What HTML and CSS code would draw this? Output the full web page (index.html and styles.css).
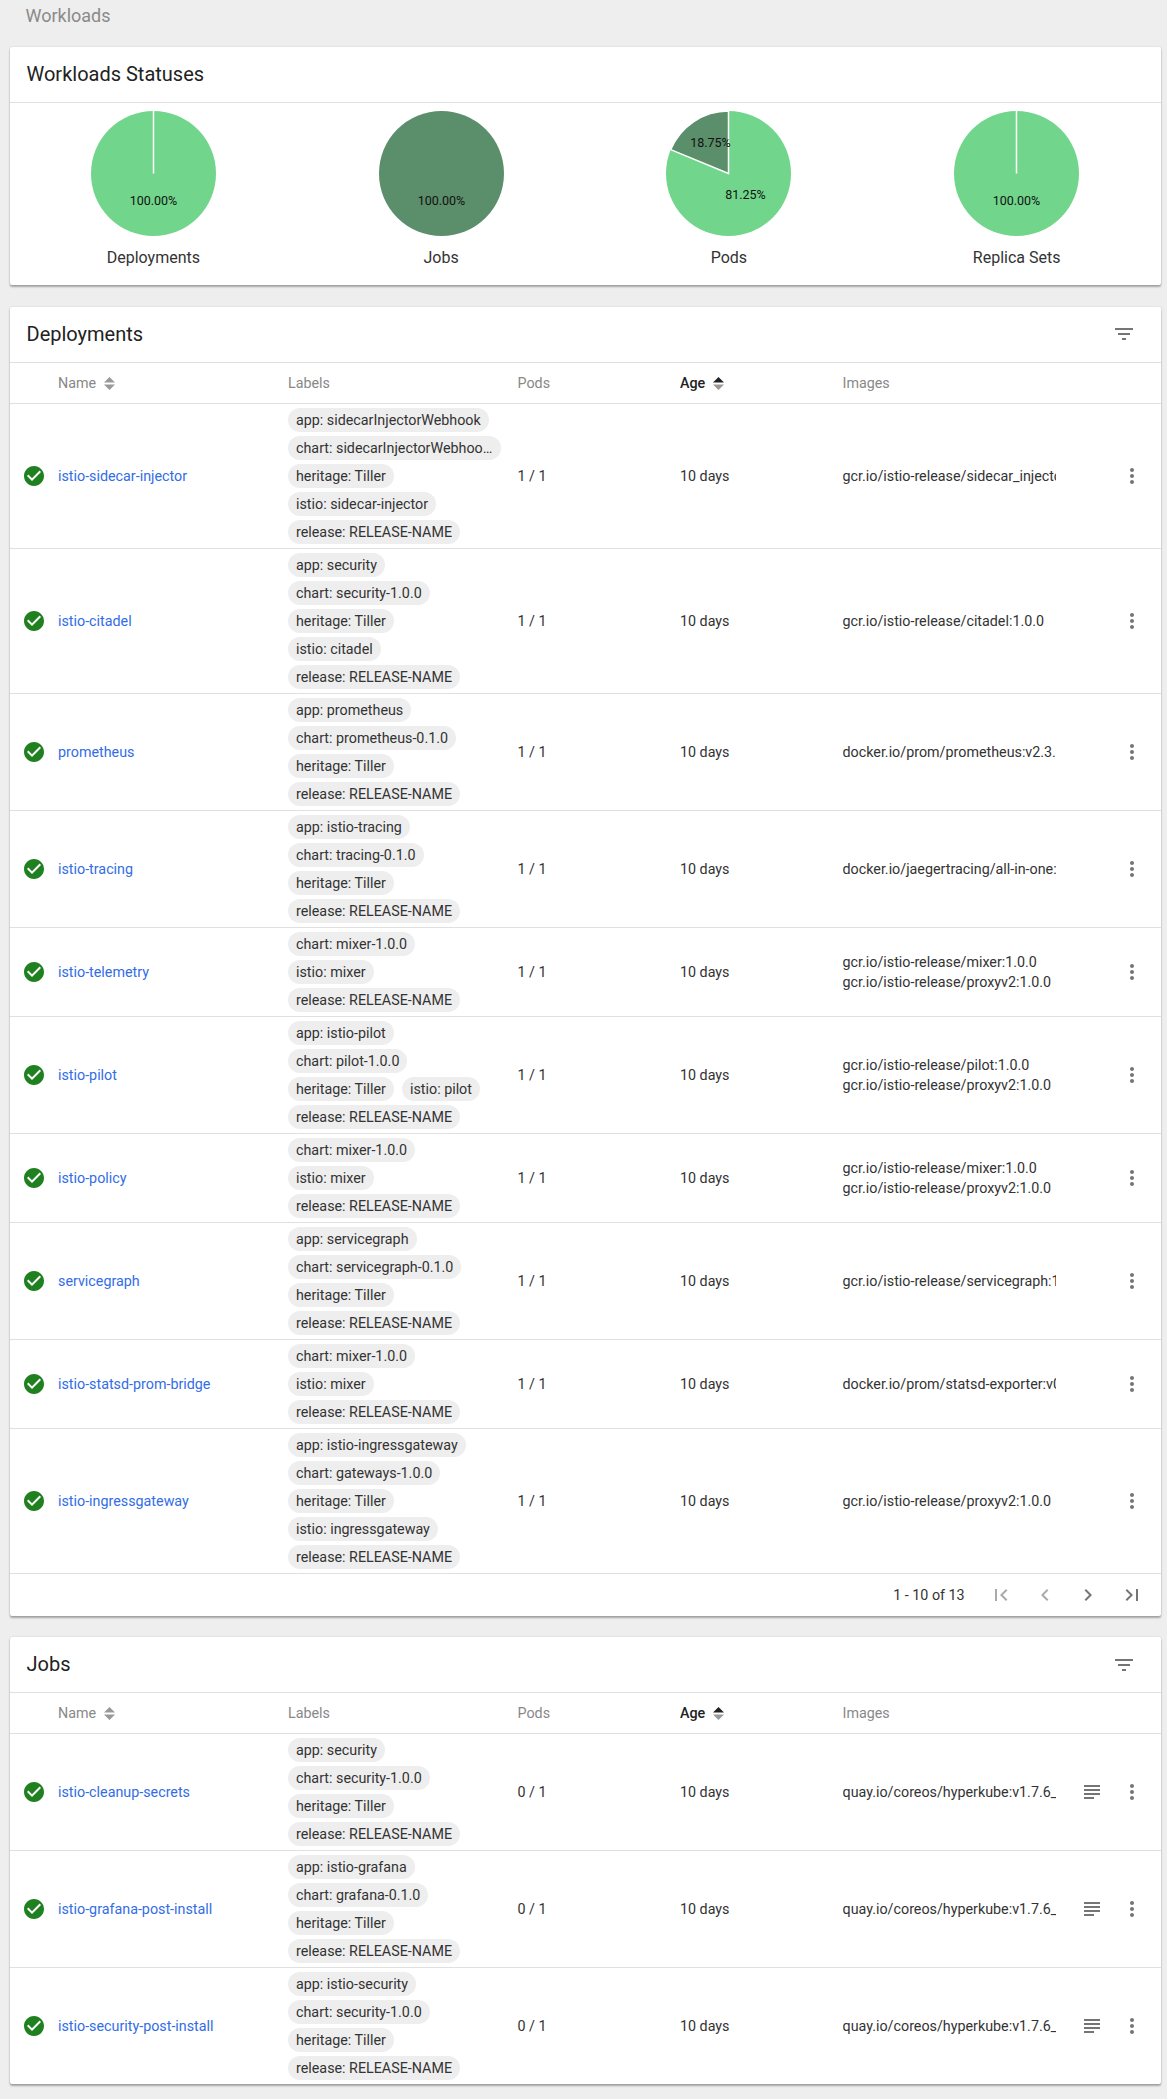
FILE: index.html
```html
<!DOCTYPE html>
<html lang="en">
<head>
    <meta charset="UTF-8">
    <title>Workloads</title>
    <link rel="stylesheet" href="styles.css">
</head>
<body>
    <svg class="defs" width="0" height="0">
        <symbol id="ok" viewBox="0 0 24 24"><path d="M12 2C6.48 2 2 6.48 2 12s4.48 10 10 10 10-4.48 10-10S17.52 2 12 2zm-2 15l-5-5 1.41-1.41L10 14.17l7.59-7.59L19 8l-9 9z"/></symbol>
        <symbol id="more" viewBox="0 0 24 24"><path d="M12 8c1.1 0 2-.9 2-2s-.9-2-2-2-2 .9-2 2 .9 2 2 2zm0 2c-1.1 0-2 .9-2 2s.9 2 2 2 2-.9 2-2-.9-2-2-2zm0 6c-1.1 0-2 .9-2 2s.9 2 2 2 2-.9 2-2-.9-2-2-2z"/></symbol>
        <symbol id="logs" viewBox="0 0 24 24"><path d="M14 17H4v2h10v-2zm6-8H4v2h16V9zM4 15h16v-2H4v2zM4 5v2h16V5H4z"/></symbol>
        <symbol id="filter" viewBox="0 0 24 24"><path d="M10 18h4v-2h-4v2zM3 6v2h18V6H3zm3 7h12v-2H6v2z"/></symbol>
        <symbol id="first" viewBox="0 0 24 24"><path d="M18.41 16.59L13.82 12l4.59-4.59L17 6l-6 6 6 6zM6 6h2v12H6z"/></symbol>
        <symbol id="prev" viewBox="0 0 24 24"><path d="M15.41 7.41L14 6l-6 6 6 6 1.41-1.41L10.83 12z"/></symbol>
        <symbol id="next" viewBox="0 0 24 24"><path d="M10 6L8.59 7.41 13.17 12l-4.58 4.59L10 18l6-6z"/></symbol>
        <symbol id="last" viewBox="0 0 24 24"><path d="M5.59 7.41L10.18 12l-4.59 4.59L7 18l6-6-6-6zM16 6h2v12h-2z"/></symbol>
    </svg>

    <div class="crumb">Workloads</div>

    <section class="card">
        <h2 class="card-title">Workloads Statuses</h2>
        <div class="pies">
            <figure class="pie">
                <svg viewBox="0 0 125 125" width="125" height="125">
                    <circle class="light" cx="62.5" cy="62.5" r="62.5"/>
                    <line class="cut" x1="62.5" y1="0" x2="62.5" y2="62.5"/>
                    <text x="62.5" y="94">100.00%</text>
                </svg>
                <figcaption>Deployments</figcaption>
            </figure>
            <figure class="pie">
                <svg viewBox="0 0 125 125" width="125" height="125">
                    <circle class="dark" cx="62.5" cy="62.5" r="62.5"/>
                    <text x="62.5" y="94">100.00%</text>
                </svg>
                <figcaption>Jobs</figcaption>
            </figure>
            <figure class="pie">
                <svg viewBox="0 0 125 125" width="125" height="125">
                    <circle class="light" cx="62.5" cy="62.5" r="62.5"/>
                    <path class="dark cut" d="M62.5 62.5L4.76 38.58A62.5 62.5 0 0 1 62.5 0Z"/>
                    <text x="79.5" y="88">81.25%</text>
                    <text x="44.5" y="36">18.75%</text>
                </svg>
                <figcaption>Pods</figcaption>
            </figure>
            <figure class="pie">
                <svg viewBox="0 0 125 125" width="125" height="125">
                    <circle class="light" cx="62.5" cy="62.5" r="62.5"/>
                    <line class="cut" x1="62.5" y1="0" x2="62.5" y2="62.5"/>
                    <text x="62.5" y="94">100.00%</text>
                </svg>
                <figcaption>Replica Sets</figcaption>
            </figure>
        </div>
    </section>

    <section class="card">
        <div class="card-head">
            <h2 class="card-title">Deployments</h2>
            <svg class="icon filter"><use href="#filter"/></svg>
        </div>
        <table>
            <thead>
                <tr>
                    <th class="c-status"></th>
                    <th class="c-name">Name <svg class="sort" viewBox="0 0 11 13"><path d="M0 5.5L5.5 0 11 5.5zM0 7.5h11L5.5 13z"/></svg></th>
                    <th class="c-labels">Labels</th>
                    <th class="c-pods">Pods</th>
                    <th class="c-age active">Age <svg class="sort" viewBox="0 0 11 13"><path class="on" d="M0 5.5L5.5 0 11 5.5z"/><path d="M0 7.5h11L5.5 13z"/></svg></th>
                    <th class="c-images">Images</th>
                    <th class="c-actions"></th>
                </tr>
            </thead>
            <tbody>
                <tr>
                    <td><svg class="icon ok"><use href="#ok"/></svg></td>
                    <td><a href="#">istio-sidecar-injector</a></td>
                    <td><div class="chips"><span>app: sidecarInjectorWebhook</span><span>chart: sidecarInjectorWebhook-1.0.0</span><span>heritage: Tiller</span><span>istio: sidecar-injector</span><span>release: RELEASE-NAME</span></div></td>
                    <td>1 / 1</td>
                    <td>10 days</td>
                    <td><div class="images">gcr.io/istio-release/sidecar_injector:1.0.0</div></td>
                    <td><div class="actions"><svg class="icon"><use href="#more"/></svg></div></td>
                </tr>
                <tr>
                    <td><svg class="icon ok"><use href="#ok"/></svg></td>
                    <td><a href="#">istio-citadel</a></td>
                    <td><div class="chips"><span>app: security</span><span>chart: security-1.0.0</span><span>heritage: Tiller</span><span>istio: citadel</span><span>release: RELEASE-NAME</span></div></td>
                    <td>1 / 1</td>
                    <td>10 days</td>
                    <td><div class="images">gcr.io/istio-release/citadel:1.0.0</div></td>
                    <td><div class="actions"><svg class="icon"><use href="#more"/></svg></div></td>
                </tr>
                <tr>
                    <td><svg class="icon ok"><use href="#ok"/></svg></td>
                    <td><a href="#">prometheus</a></td>
                    <td><div class="chips"><span>app: prometheus</span><span>chart: prometheus-0.1.0</span><span>heritage: Tiller</span><span>release: RELEASE-NAME</span></div></td>
                    <td>1 / 1</td>
                    <td>10 days</td>
                    <td><div class="images">docker.io/prom/prometheus:v2.3.1</div></td>
                    <td><div class="actions"><svg class="icon"><use href="#more"/></svg></div></td>
                </tr>
                <tr>
                    <td><svg class="icon ok"><use href="#ok"/></svg></td>
                    <td><a href="#">istio-tracing</a></td>
                    <td><div class="chips"><span>app: istio-tracing</span><span>chart: tracing-0.1.0</span><span>heritage: Tiller</span><span>release: RELEASE-NAME</span></div></td>
                    <td>1 / 1</td>
                    <td>10 days</td>
                    <td><div class="images">docker.io/jaegertracing/all-in-one:1.5</div></td>
                    <td><div class="actions"><svg class="icon"><use href="#more"/></svg></div></td>
                </tr>
                <tr>
                    <td><svg class="icon ok"><use href="#ok"/></svg></td>
                    <td><a href="#">istio-telemetry</a></td>
                    <td><div class="chips"><span>chart: mixer-1.0.0</span><span>istio: mixer</span><span>release: RELEASE-NAME</span></div></td>
                    <td>1 / 1</td>
                    <td>10 days</td>
                    <td><div class="images">gcr.io/istio-release/mixer:1.0.0</div><div class="images">gcr.io/istio-release/proxyv2:1.0.0</div></td>
                    <td><div class="actions"><svg class="icon"><use href="#more"/></svg></div></td>
                </tr>
                <tr>
                    <td><svg class="icon ok"><use href="#ok"/></svg></td>
                    <td><a href="#">istio-pilot</a></td>
                    <td><div class="chips"><span>app: istio-pilot</span><span>chart: pilot-1.0.0</span><span>heritage: Tiller</span><span>istio: pilot</span><span>release: RELEASE-NAME</span></div></td>
                    <td>1 / 1</td>
                    <td>10 days</td>
                    <td><div class="images">gcr.io/istio-release/pilot:1.0.0</div><div class="images">gcr.io/istio-release/proxyv2:1.0.0</div></td>
                    <td><div class="actions"><svg class="icon"><use href="#more"/></svg></div></td>
                </tr>
                <tr>
                    <td><svg class="icon ok"><use href="#ok"/></svg></td>
                    <td><a href="#">istio-policy</a></td>
                    <td><div class="chips"><span>chart: mixer-1.0.0</span><span>istio: mixer</span><span>release: RELEASE-NAME</span></div></td>
                    <td>1 / 1</td>
                    <td>10 days</td>
                    <td><div class="images">gcr.io/istio-release/mixer:1.0.0</div><div class="images">gcr.io/istio-release/proxyv2:1.0.0</div></td>
                    <td><div class="actions"><svg class="icon"><use href="#more"/></svg></div></td>
                </tr>
                <tr>
                    <td><svg class="icon ok"><use href="#ok"/></svg></td>
                    <td><a href="#">servicegraph</a></td>
                    <td><div class="chips"><span>app: servicegraph</span><span>chart: servicegraph-0.1.0</span><span>heritage: Tiller</span><span>release: RELEASE-NAME</span></div></td>
                    <td>1 / 1</td>
                    <td>10 days</td>
                    <td><div class="images">gcr.io/istio-release/servicegraph:1.0.0</div></td>
                    <td><div class="actions"><svg class="icon"><use href="#more"/></svg></div></td>
                </tr>
                <tr>
                    <td><svg class="icon ok"><use href="#ok"/></svg></td>
                    <td><a href="#">istio-statsd-prom-bridge</a></td>
                    <td><div class="chips"><span>chart: mixer-1.0.0</span><span>istio: mixer</span><span>release: RELEASE-NAME</span></div></td>
                    <td>1 / 1</td>
                    <td>10 days</td>
                    <td><div class="images">docker.io/prom/statsd-exporter:v0.6.0</div></td>
                    <td><div class="actions"><svg class="icon"><use href="#more"/></svg></div></td>
                </tr>
                <tr>
                    <td><svg class="icon ok"><use href="#ok"/></svg></td>
                    <td><a href="#">istio-ingressgateway</a></td>
                    <td><div class="chips"><span>app: istio-ingressgateway</span><span>chart: gateways-1.0.0</span><span>heritage: Tiller</span><span>istio: ingressgateway</span><span>release: RELEASE-NAME</span></div></td>
                    <td>1 / 1</td>
                    <td>10 days</td>
                    <td><div class="images">gcr.io/istio-release/proxyv2:1.0.0</div></td>
                    <td><div class="actions"><svg class="icon"><use href="#more"/></svg></div></td>
                </tr>
            </tbody>
        </table>
        <div class="pager">
            <span class="range">1 - 10 of 13</span>
            <svg class="icon off"><use href="#first"/></svg>
            <svg class="icon off"><use href="#prev"/></svg>
            <svg class="icon"><use href="#next"/></svg>
            <svg class="icon"><use href="#last"/></svg>
        </div>
    </section>

    <section class="card">
        <div class="card-head">
            <h2 class="card-title">Jobs</h2>
            <svg class="icon filter"><use href="#filter"/></svg>
        </div>
        <table>
            <thead>
                <tr>
                    <th class="c-status"></th>
                    <th class="c-name">Name <svg class="sort" viewBox="0 0 11 13"><path d="M0 5.5L5.5 0 11 5.5zM0 7.5h11L5.5 13z"/></svg></th>
                    <th class="c-labels">Labels</th>
                    <th class="c-pods">Pods</th>
                    <th class="c-age active">Age <svg class="sort" viewBox="0 0 11 13"><path class="on" d="M0 5.5L5.5 0 11 5.5z"/><path d="M0 7.5h11L5.5 13z"/></svg></th>
                    <th class="c-images">Images</th>
                    <th class="c-actions"></th>
                </tr>
            </thead>
            <tbody>
                <tr>
                    <td><svg class="icon ok"><use href="#ok"/></svg></td>
                    <td><a href="#">istio-cleanup-secrets</a></td>
                    <td><div class="chips"><span>app: security</span><span>chart: security-1.0.0</span><span>heritage: Tiller</span><span>release: RELEASE-NAME</span></div></td>
                    <td>0 / 1</td>
                    <td>10 days</td>
                    <td><div class="images">quay.io/coreos/hyperkube:v1.7.6_coreos.0</div></td>
                    <td><div class="actions"><svg class="icon"><use href="#logs"/></svg><svg class="icon"><use href="#more"/></svg></div></td>
                </tr>
                <tr>
                    <td><svg class="icon ok"><use href="#ok"/></svg></td>
                    <td><a href="#">istio-grafana-post-install</a></td>
                    <td><div class="chips"><span>app: istio-grafana</span><span>chart: grafana-0.1.0</span><span>heritage: Tiller</span><span>release: RELEASE-NAME</span></div></td>
                    <td>0 / 1</td>
                    <td>10 days</td>
                    <td><div class="images">quay.io/coreos/hyperkube:v1.7.6_coreos.0</div></td>
                    <td><div class="actions"><svg class="icon"><use href="#logs"/></svg><svg class="icon"><use href="#more"/></svg></div></td>
                </tr>
                <tr>
                    <td><svg class="icon ok"><use href="#ok"/></svg></td>
                    <td><a href="#">istio-security-post-install</a></td>
                    <td><div class="chips"><span>app: istio-security</span><span>chart: security-1.0.0</span><span>heritage: Tiller</span><span>release: RELEASE-NAME</span></div></td>
                    <td>0 / 1</td>
                    <td>10 days</td>
                    <td><div class="images">quay.io/coreos/hyperkube:v1.7.6_coreos.0</div></td>
                    <td><div class="actions"><svg class="icon"><use href="#logs"/></svg><svg class="icon"><use href="#more"/></svg></div></td>
                </tr>
            </tbody>
        </table>
    </section>
</body>
</html>
```

FILE: styles.css
```css
body{
    margin: 0;
    padding: 0 6.5px 14px 9.5px;
    background: #eee;
    color: #333;
    font: 14.3px/20px Roboto, sans-serif;
}
.defs{
    position: absolute;
}
.crumb{
    height: 47px;
    padding: 4px 0 0 16px;
    box-sizing: border-box;
    color: #8a8a8a;
    font-size: 18px;
    line-height: 24px;
}
.card{
    margin-bottom: 21.5px;
    background: #fff;
    border-radius: 2px;
    box-shadow: 0 2px 2px rgba(0,0,0,.3), 0 0 2px rgba(0,0,0,.14);
}
.card:last-child{
    margin-bottom: 0;
}
.card-title{
    margin: 0;
    padding-left: 17px;
    color: #222;
    font-size: 20px;
    font-weight: 400;
    line-height: 55px;
}
.card > .card-title,
.card-head{
    height: 55px;
    border-bottom: 1px solid #e0e0e0;
}
.card-head{
    display: flex;
    align-items: center;
    justify-content: space-between;
}

/* pie charts */
.pies{
    display: grid;
    grid-template-columns: repeat(4, 1fr);
    padding: 8px 0 17px;
}
.pie{
    margin: 0;
    text-align: center;
}
.pie svg{
    display: block;
    margin: 0 auto;
}
.pie figcaption{
    margin-top: 12px;
    color: #333;
    font-size: 16px;
}
.pie text{
    fill: #111;
    font-size: 12.5px;
    text-anchor: middle;
}
.light{
    fill: #71d68c;
}
.dark{
    fill: #5b8e6a;
}
.cut{
    stroke: #fff;
    stroke-width: 1.5;
}

/* icons */
.icon{
    display: block;
    flex: none;
    width: 24px;
    height: 24px;
    fill: #757575;
}
.icon.ok{
    margin-left: 12.5px;
    fill: #1f801f;
}
.icon.filter{
    margin-right: 25px;
}
.icon.off{
    fill: #aaa;
}

/* tables */
table{
    width: 100%;
    border-collapse: collapse;
    table-layout: fixed;
}
th{
    height: 40px;
    padding: 0;
    color: #888;
    font-weight: 400;
    text-align: left;
    white-space: nowrap;
}
th.active{
    color: #222;
    font-weight: 500;
}
.c-status{
    width: 48.5px;
}
.c-name{
    width: 230px;
}
.c-labels{
    width: 229.5px;
}
.c-pods{
    width: 162.5px;
}
.c-age{
    width: 162.5px;
}
.c-images{
    width: 213px;
}
tr{
    border-bottom: 1px solid #e0e0e0;
}
tbody tr:last-child{
    border-bottom: none;
}
.card:nth-of-type(2) tbody tr:last-child{
    border-bottom: 1px solid #e0e0e0;
}
td{
    padding: 0;
}
a{
    color: #326de6;
    text-decoration: none;
}
.sort{
    width: 11px;
    height: 13px;
    margin-left: 4px;
    vertical-align: -2px;
    fill: #999;
}
.sort .on{
    fill: #222;
}
.chips{
    display: flex;
    flex-wrap: wrap;
    gap: 4px 8px;
    width: 200px;
    padding: 4px 0;
}
.chips span{
    flex: none;
    overflow: hidden;
    box-sizing: border-box;
    max-width: 213px;
    height: 24px;
    padding: 0 8px;
    background: #eee;
    border-radius: 12px;
    line-height: 24px;
    text-overflow: ellipsis;
    white-space: nowrap;
}
.images{
    overflow: hidden;
    white-space: nowrap;
}
.actions{
    display: flex;
    justify-content: flex-end;
    gap: 16px;
    padding-right: 16.5px;
}

/* pagination */
.pager{
    display: flex;
    align-items: center;
    justify-content: flex-end;
    gap: 19.7px;
    height: 42px;
    padding-right: 16.5px;
}
.range{
    margin-right: 4.6px;
    color: #333;
}
```
